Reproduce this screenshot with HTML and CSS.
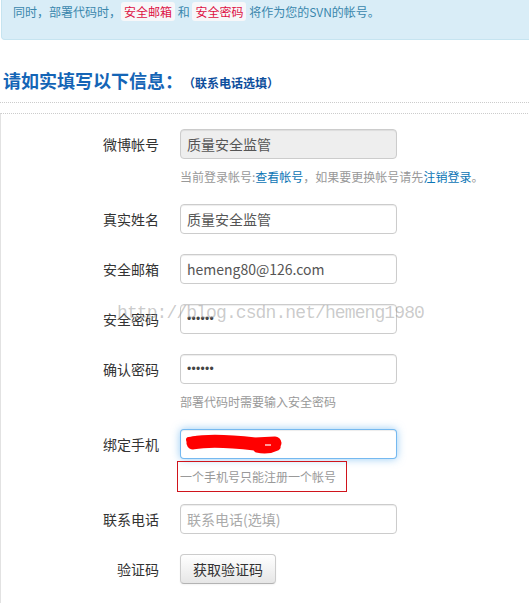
FILE: index.html
```html
<!DOCTYPE html>
<html lang="zh-CN">
<head>
  <meta charset="UTF-8" />
  <title>SVN帐号设置</title>
  <link rel="stylesheet" href="styles.css">
</head>
<body>
  <div class="page">
    <div class="alert">
      同时，部署代码时，<code>安全邮箱</code> 和 <code>安全密码</code> 将作为您的SVN的帐号。
    </div>

    <h3 class="title">请如实填写以下信息：<small>（联系电话选填）</small></h3>

    <form class="form-box">
      <div class="control-group">
        <label class="control-label">微博帐号</label>
        <div class="controls">
          <input type="text" class="field" value="质量安全监管" disabled>
          <p class="help-block">当前登录帐号:<a href="#">查看帐号</a>，如果要更换帐号请先<a href="#">注销登录</a>。</p>
        </div>
      </div>

      <div class="control-group">
        <label class="control-label">真实姓名</label>
        <div class="controls">
          <input type="text" class="field" value="质量安全监管">
        </div>
      </div>

      <div class="control-group">
        <label class="control-label">安全邮箱</label>
        <div class="controls">
          <input type="text" class="field" value="hemeng80@126.com">
        </div>
      </div>

      <div class="control-group">
        <label class="control-label">安全密码</label>
        <div class="controls">
          <input type="text" class="field dots" value="••••••">
        </div>
      </div>

      <div class="control-group">
        <label class="control-label">确认密码</label>
        <div class="controls">
          <input type="text" class="field dots" value="••••••">
          <p class="help-block">部署代码时需要输入安全密码</p>
        </div>
      </div>

      <div class="control-group">
        <label class="control-label">绑定手机</label>
        <div class="controls">
          <div class="field focus">
            <svg class="scribble" width="100" height="22" viewBox="0 0 100 22">
              <path d="M8 10 C22 7, 45 8, 70 11 L90 10" stroke="#f00" stroke-width="13" stroke-linecap="round" fill="none"/>
              <path d="M4 7 L12 6" stroke="#f00" stroke-width="6" stroke-linecap="round"/>
              <path d="M72 16 C80 18, 86 17, 92 14" stroke="#f00" stroke-width="7" stroke-linecap="round" fill="none"/>
              <path d="M80 12 L86 12" stroke="#fff" stroke-width="1.2"/>
            </svg>
          </div>
          <p class="help-block"><span class="marked">一个手机号只能注册一个帐号</span></p>
        </div>
      </div>

      <div class="control-group">
        <label class="control-label">联系电话</label>
        <div class="controls">
          <input type="text" class="field" placeholder="联系电话(选填)">
        </div>
      </div>

      <div class="control-group">
        <label class="control-label">验证码</label>
        <div class="controls">
          <button type="button" class="btn">获取验证码</button>
        </div>
      </div>

      <div class="watermark">http://blog.csdn.net/hemeng1980</div>
    </form>
  </div>
</body>
</html>
```

FILE: styles.css
```css
html, body {
  overflow: hidden;
}

body {
  margin: 0;
  font-family: "Noto Sans CJK SC", "Liberation Sans", sans-serif;
  font-size: 12px;
  color: #333;
  background: #fff;
}

.page {
  width: 560px;
}

.alert {
  margin-left: 1px;
  height: 21px;
  padding: 3px 12px 15px 11px;
  line-height: 18px;
  background: #d9edf7;
  color: #3a87ad;
  border: 1px solid #c6e4f0;
  border-top: none;
  border-radius: 0 0 0 4px;
}

.alert code {
  font-family: inherit;
  font-size: 12px;
  line-height: 12px;
  color: #d14;
  background: #f7f7f9;
  border-radius: 3px;
  padding: 1px 3px;
}

.title {
  height: 24px;
  margin: 28px 0 0;
  padding: 0 0 10px 3px;
  font-size: 18px;
  line-height: 24px;
  color: #1565b6;
  border-bottom: 1px dotted #ccc;
  width: 526px;
}

.title small {
  font-size: 12px;
  line-height: 12px;
  color: #0d4e9c;
  margin-left: 6px;
}

.form-box {
  position: relative;
  margin: 10px 0 0;
  padding: 15px 0 14px;
  border-top: 1px dotted #ccc;
  border-left: 1px solid #e2e2e2;
  border-bottom: 1px solid #e2e2e2;
}

.control-group {
  display: flex;
  align-items: flex-start;
  margin-bottom: 20px;
}

.control-group:last-of-type {
  margin-bottom: 0;
}

.control-label {
  width: 158px;
  margin-right: 21px;
  text-align: right;
  font-size: 14px;
  line-height: 30px;
  color: #333;
}

.controls {
  display: flex;
  flex-direction: column;
}

.field {
  box-sizing: border-box;
  width: 217px;
  height: 30px;
  margin: 0;
  padding: 4px 6px;
  font-family: inherit;
  font-size: 14px;
  color: #555;
  background: #fff;
  border: 1px solid #ccc;
  border-radius: 4px;
  box-shadow: inset 0 1px 1px rgba(0, 0, 0, 0.075);
}

.field::placeholder {
  color: #aaa;
}

.field:disabled {
  background: #eee;
  color: #555;
}

.field.dots {
  font-family: "Liberation Sans", sans-serif;
  font-size: 12px;
  letter-spacing: 0.3px;
  color: #444;
}

.field.focus {
  display: flex;
  align-items: center;
  padding: 0 0 0 4px;
  border-color: rgba(82, 168, 236, 0.8);
  box-shadow: inset 0 1px 1px rgba(0, 0, 0, 0.075), 0 0 8px rgba(82, 168, 236, 0.6);
}

.help-block {
  margin: 0;
  padding-top: 11px;
  font-size: 12px;
  line-height: 14px;
  color: #999;
}

.help-block a {
  color: #0b75b5;
  text-decoration: none;
}

.marked {
  position: relative;
}

.marked::after {
  content: "";
  position: absolute;
  top: -7px;
  bottom: -7px;
  left: -3px;
  right: -11px;
  border: 1px solid #d0141c;
}

.btn {
  height: 30px;
  padding: 0 12px;
  font-family: inherit;
  font-size: 14px;
  color: #333;
  background: linear-gradient(#fff, #e6e6e6);
  border: 1px solid #ccc;
  border-bottom-color: #b3b3b3;
  border-radius: 4px;
  box-shadow: inset 0 1px 0 rgba(255, 255, 255, 0.2), 0 1px 2px rgba(0, 0, 0, 0.05);
}

.watermark {
  position: absolute;
  left: 116px;
  top: 189px;
  font-family: "Liberation Mono", monospace;
  font-size: 18px;
  letter-spacing: -0.9px;
  color: rgba(140, 140, 140, 0.45);
  pointer-events: none;
}
```
